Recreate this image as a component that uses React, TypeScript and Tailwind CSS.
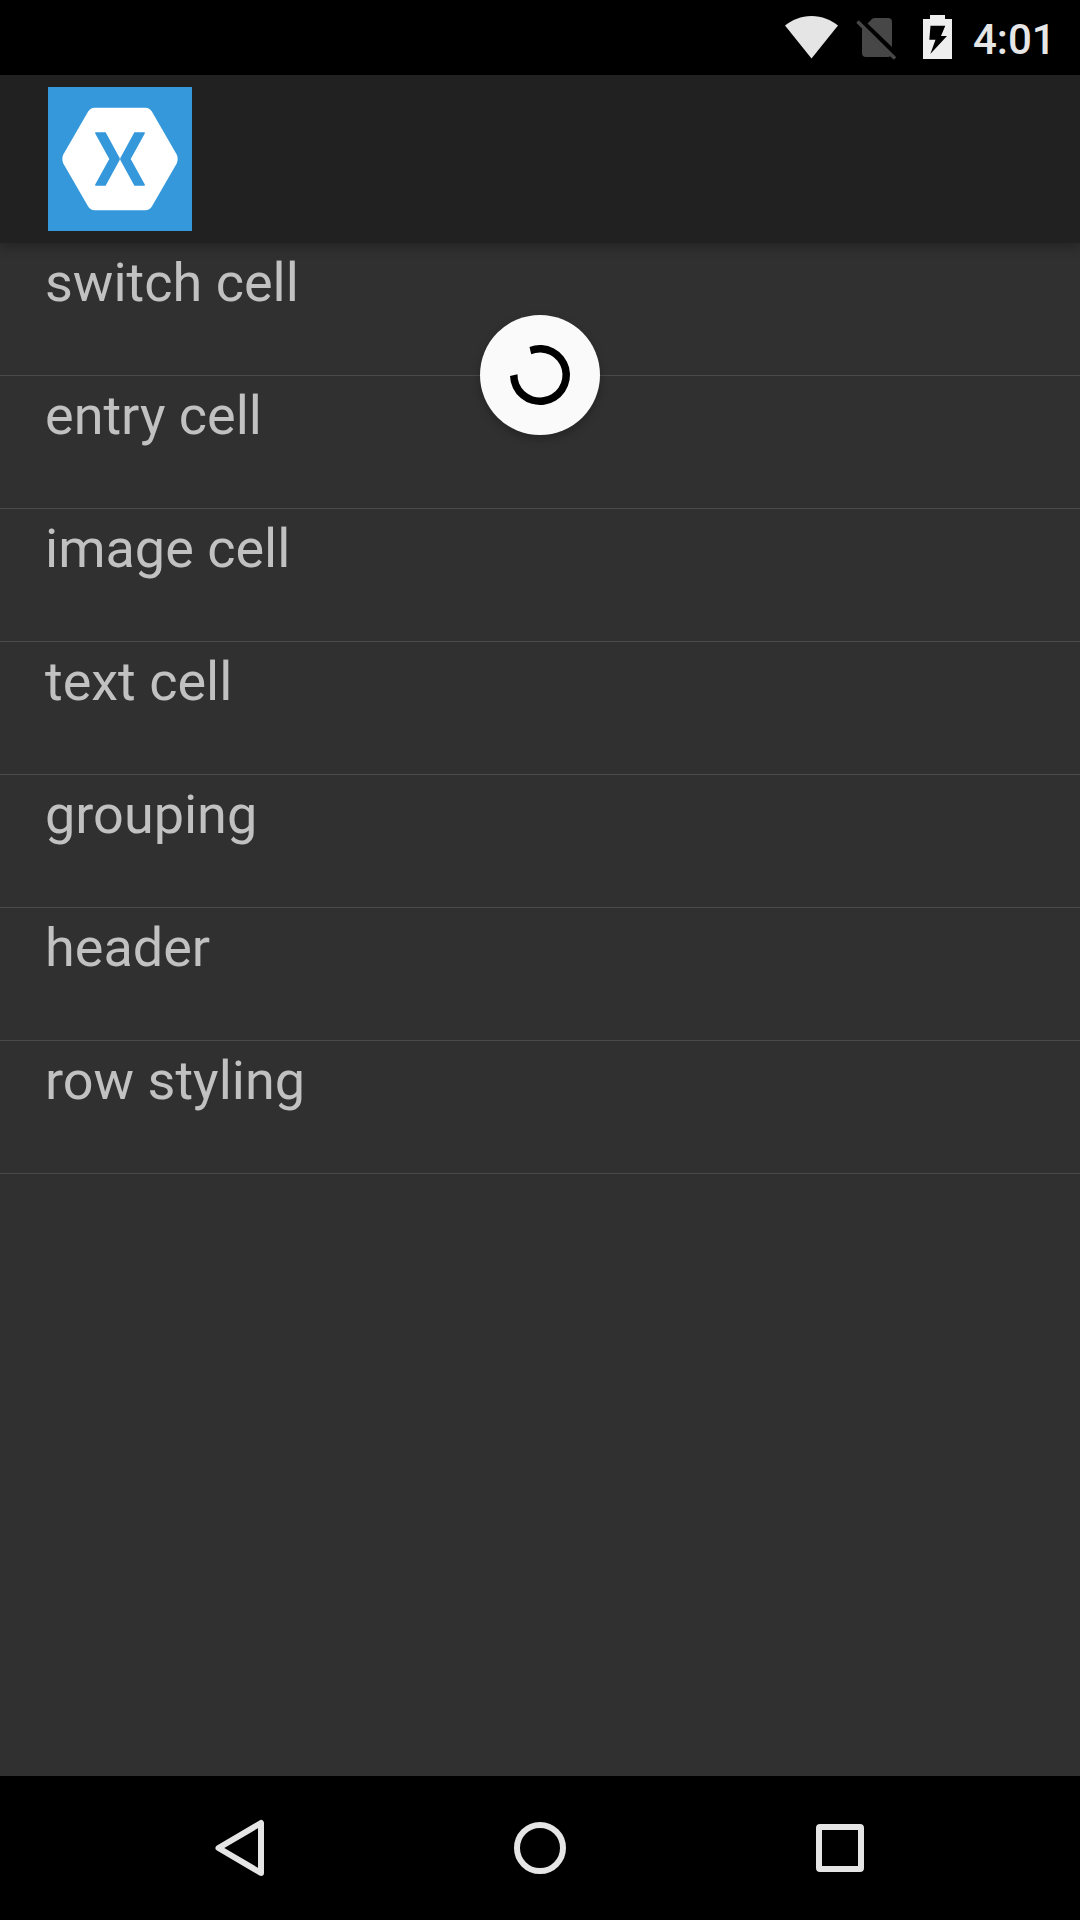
const rows = [
  'switch cell',
  'entry cell',
  'image cell',
  'text cell',
  'grouping',
  'header',
  'row styling',
];

function StatusBar() {
  return (
    <div className="flex h-[75px] shrink-0 items-start justify-end bg-black pr-[28px]">
      <svg className="h-[75px] w-[188px]" viewBox="780 0 188 75">
        <path d="M785 25.5C792 20 801 16 811.5 16S831 20 838 25.5L811.5 58.5Z" fill="#e5e5e5" />
        <path
          d="M867.5 23.5 872 19Q873.2 18 875 18H888Q892 18 892 22V47ZM862 27.500 890.500 56Q889.500 57 888 57H866Q862 57 862 53Z"
          fill="#474747"
        />
        <path d="M857.5 21.5 895 58.5" stroke="#474747" strokeWidth="3.6" />
        <path
          fillRule="evenodd"
          d="M923 19H930V15H945V19H952V59H923ZM930.5 25.7 929.3 39.7H935.5L930.3 54 947 36H941L945.3 25.7Z"
          fill="#eee"
        />
      </svg>
      <span className="mt-[15px] w-[84px] pl-[5px] text-[42px] leading-[49px] font-medium text-[#e6e6e6]">4:01</span>
    </div>
  );
}

function AppBar() {
  return (
    <header className="relative z-10 flex h-[168px] shrink-0 items-center bg-[#212121] pl-[48px] shadow-[0_4px_10px_rgba(0,0,0,0.26)]">
      <svg className="size-[144px]" viewBox="0 0 144 144">
        <path d="M0 0H144V144H0Z" fill="#3498db" />
        <path
          d="M46.5 20.7H97.5Q101.5 20.7 104 24.7L128.7 67.5Q130.6 72 128.7 76.5L104 119.3Q101.5 123.3 97.5 123.3H46.5Q42.5 123.3 40 119.3L15.3 76.5Q13.4 72 15.3 67.5L40 24.7Q42.5 20.7 46.5 20.7Z"
          fill="#fff"
        />
        <path
          d="M47.8 45.2H57.6L71.8 71.3V72.7L57.6 98.7H47.8Q46.8 98.7 47.2 97.5L61.3 72 47.2 46.5Q46.8 45.2 47.8 45.2ZM96.2 45.2H86.4L72.2 71.3V72.7L86.4 98.7H96.2Q97.2 98.7 96.8 97.5L82.7 72 96.8 46.5Q97.2 45.2 96.2 45.2Z"
          fill="#3498db"
        />
      </svg>
    </header>
  );
}

function RefreshSpinner() {
  return (
    <div className="absolute top-[72px] left-1/2 z-20 -ml-[60px] size-[120px] rounded-full bg-[#fafafa] shadow-[0_4px_10px_rgba(0,0,0,0.24)]">
      <svg className="size-full" viewBox="0 0 120 120">
        <path d="M49.5 31.9A30 30 0 1 1 30 61L37.5 59.3A22.5 22.5 0 1 0 51.2 39.3Z" fill="#000" />
      </svg>
    </div>
  );
}

function NavBar() {
  return (
    <nav className="flex h-[144px] shrink-0 items-center justify-center gap-[228px] bg-black">
      <svg className="size-[72px]" viewBox="0 0 72 72" fill="none" stroke="#e5e5e5">
        <path d="M14.5 36 57 11V61Z" strokeWidth="6" strokeLinejoin="round" />
      </svg>
      <svg className="size-[72px]" viewBox="0 0 72 72" fill="none" stroke="#e5e5e5">
        <circle cx="36" cy="36" r="23" strokeWidth="6" />
      </svg>
      <svg className="size-[72px]" viewBox="0 0 72 72" fill="#e5e5e5">
        <path fillRule="evenodd" d="M16 12H56Q60 12 60 16V56Q60 60 56 60H16Q12 60 12 56V16Q12 12 16 12ZM18 18V54H54V18Z" />
      </svg>
    </nav>
  );
}

export default function App() {
  return (
    <div className="flex h-[1920px] w-[1080px] flex-col overflow-hidden bg-[#303030] font-['Roboto',sans-serif]">
      <StatusBar />
      <AppBar />
      <main className="relative flex-1">
        <ul>
          {rows.map((row) => (
            <li
              key={row}
              className="h-[133px] border-b border-[#4a4a4a] pt-[8px] pl-[45px] text-[54px] leading-[63px] text-[#c1c1c1]"
            >
              {row}
            </li>
          ))}
        </ul>
        <RefreshSpinner />
      </main>
      <NavBar />
    </div>
  );
}
